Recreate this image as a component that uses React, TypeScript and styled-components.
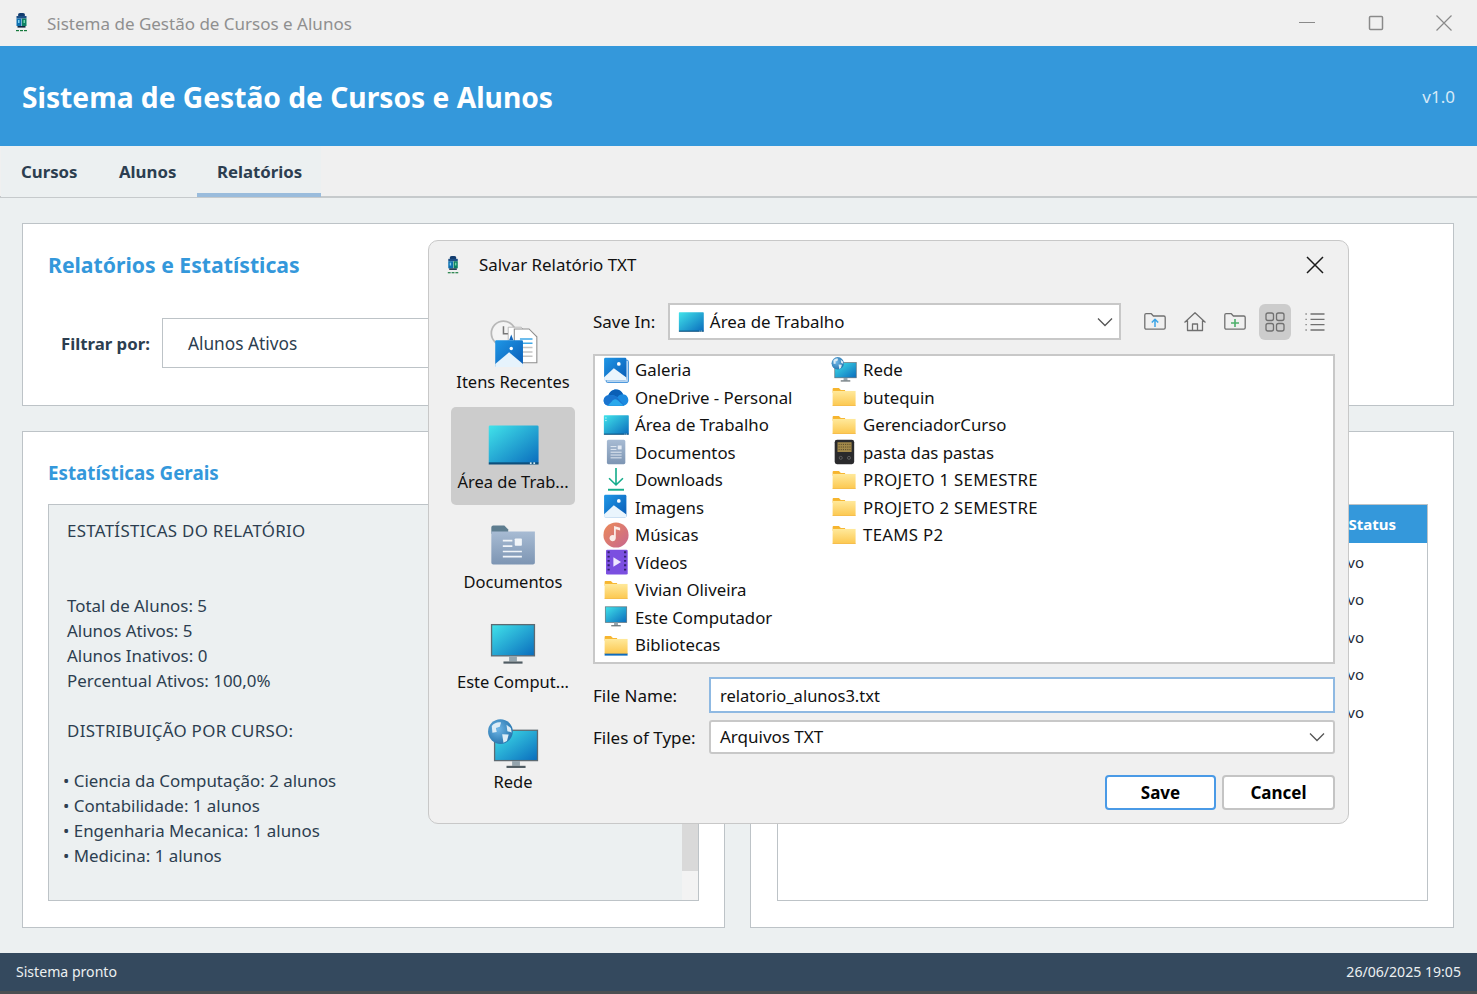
import React from 'react';
import styled, { createGlobalStyle } from 'styled-components';

const FONT = '"Noto Sans", "Open Sans", sans-serif';

const GlobalStyle = createGlobalStyle`
  html, body {
    margin: 0;
    padding: 0;
    height: 100%;
    overflow: hidden;
    background: #ecf0f1;
    font-family: ${FONT};
  }
  * {
    box-sizing: border-box;
  }
`;

type IconProps = { size?: number };

const Gradients = () => (
  <HiddenSvg aria-hidden="true">
    <defs>
      <linearGradient id="teal" x1="0" y1="0" x2="1" y2="1">
        <stop offset="0" stopColor="#41e3ea" />
        <stop offset="1" stopColor="#0a6cbd" />
      </linearGradient>
      <linearGradient id="folder" x1="0" y1="0" x2="0" y2="1">
        <stop offset="0" stopColor="#ffe99b" />
        <stop offset="1" stopColor="#fcc850" />
      </linearGradient>
      <linearGradient id="photo" x1="0" y1="0" x2="1" y2="1">
        <stop offset="0" stopColor="#1f97e6" />
        <stop offset="1" stopColor="#0a5bb5" />
      </linearGradient>
      <linearGradient id="docs" x1="0" y1="0" x2="0" y2="1">
        <stop offset="0" stopColor="#a7bbd3" />
        <stop offset="1" stopColor="#7d95b3" />
      </linearGradient>
      <linearGradient id="music" x1="0" y1="0" x2="1" y2="1">
        <stop offset="0" stopColor="#ec8a58" />
        <stop offset="1" stopColor="#c76790" />
      </linearGradient>
      <radialGradient id="globe" cx="0.4" cy="0.4" r="0.7">
        <stop offset="0" stopColor="#6fb6e6" />
        <stop offset="1" stopColor="#1f6ea8" />
      </radialGradient>
    </defs>
  </HiddenSvg>
);

const AppIcon = ({ size = 20 }: IconProps) => (
  <svg width={size} height={size} viewBox="0 0 20 20">
    <rect x="6" y="0" width="7" height="4" rx="2" fill="#123c6e" />
    <rect x="4.5" y="3" width="10" height="2.5" fill="#1d4f86" />
    <rect x="4.5" y="5.5" width="5" height="7.5" fill="#0d6fb0" />
    <rect x="10" y="5.5" width="4.5" height="7.5" fill="#0c7f63" />
    <rect x="6" y="7" width="1.5" height="3" fill="#7fd0ef" />
    <rect x="11.5" y="7" width="1.5" height="3" fill="#6fd6a8" />
    <rect x="5.5" y="13" width="8" height="1.6" fill="#10253f" />
    <rect x="4" y="17" width="3" height="1.2" fill="#157a3c" />
    <rect x="8" y="17" width="3" height="1.2" fill="#157a3c" />
    <rect x="12" y="17" width="3" height="1.2" fill="#157a3c" />
  </svg>
);

const DesktopIcon = ({ size = 26, marks }: IconProps & { marks?: boolean }) => (
  <svg width={size} height={size} viewBox="0 0 24 24">
    <rect x="0.8" y="3" width="23" height="17.5" rx="0.6" fill="url(#teal)" />
    <rect x="0.8" y="20" width="23" height="1" fill="#0d4f7c" />
    <rect x="19.8" y="20" width="0.8" height="0.8" fill="#d8eef7" />
    <rect x="21.4" y="20" width="0.8" height="0.8" fill="#d8eef7" />
    {marks && (
      <>
        <rect x="2.2" y="5" width="1" height="1" fill="#e8fbff" />
        <rect x="2.2" y="7.4" width="1" height="1" fill="#e8fbff" />
      </>
    )}
  </svg>
);

const MonitorIcon = ({ size = 26 }: IconProps) => (
  <svg width={size} height={size} viewBox="0 0 24 24">
    <rect x="2.1" y="2.6" width="19.8" height="14.4" fill="url(#teal)" stroke="#5d6a72" strokeWidth="0.6" />
    <rect x="10.2" y="17.2" width="3.6" height="2.4" fill="#95a5ae" />
    <rect x="7.6" y="19.6" width="8.8" height="1" fill="#4f5b62" />
  </svg>
);

const NetworkIcon = ({ size = 26 }: IconProps) => (
  <svg width={size} height={size} viewBox="0 0 24 24">
    <rect x="3.5" y="5.2" width="19.8" height="14" fill="url(#teal)" stroke="#5d6a72" strokeWidth="0.6" />
    <rect x="11.6" y="19.4" width="3.6" height="2.2" fill="#95a5ae" />
    <rect x="9" y="21.6" width="8.8" height="1" fill="#4f5b62" />
    <circle cx="6.2" cy="5.8" r="5.7" fill="url(#globe)" />
    <path d="M2.2 3.2c1.2-1.5 3-2 4.3-1.6l-.6 2-1.8.6.4 1.8-2 .4zM7 7l3 .2-.8 3-1.6.8zM9 2.6l2 1.6.4 2-2-.6z" fill="#dcecf6" />
  </svg>
);

const FolderIcon = ({ size = 26, shelf }: IconProps & { shelf?: boolean }) => (
  <svg width={size} height={size} viewBox="0 0 24 24">
    <path d="M1.5 6V4.6c0-.5.4-.8.8-.8h5l1.8 1.8H13V8H1.5z" fill="#f6b52e" />
    <path d="M1.5 6.4h21.2V20H1.5z" fill="url(#folder)" />
    <rect x="1.5" y="19.4" width="21.2" height="0.7" fill="#f3b53a" />
    {shelf && <rect x="1.5" y="20" width="21.2" height="1.8" fill="#0f6cbd" />}
  </svg>
);

const PhotoIcon = ({ size = 26, stacked }: IconProps & { stacked?: boolean }) => (
  <svg width={size} height={size} viewBox="0 0 24 24">
    {stacked && <rect x="3" y="3" width="20.5" height="20.5" rx="1.2" fill="#bcd8f2" stroke="#2f86d6" strokeWidth="0.8" />}
    <rect x="1" y="0.8" width="20.6" height="20.6" rx="1.2" fill="url(#photo)" />
    <circle cx="14.6" cy="6.4" r="1.7" fill="#fff" />
    <path d="M1 21.4v-2.6L10 10.4l11.6 8.6v2.4z" fill="#eaf5fd" />
  </svg>
);

const CloudIcon = ({ size = 26 }: IconProps) => (
  <svg width={size} height={size} viewBox="0 0 24 24">
    <path d="M5.4 20C2.6 20 .6 17.8.6 15.2c0-2.5 1.9-4.5 4.4-4.8C6 7 8.8 5 12 5c2.9 0 5.4 1.6 6.5 4.4 2.8.2 4.9 2.5 4.9 5.3 0 2.9-2.3 5.3-5.2 5.3z" fill="#1b8ae0" />
    <path d="M5 10.4C6 7 8.8 5 12 5c2.9 0 5.4 1.6 6.5 4.4-2.6 0-4.2 1.2-5.2 2.8-2.4-1.8-5.6-2.2-8.3-1.8z" fill="#0b5fb6" />
    <path d="M5.4 20C2.6 20 .6 17.8.6 15.2c0-2.5 1.9-4.5 4.4-4.8 3-.5 6 .2 8.3 2l6.5 7.6z" fill="#1a74cf" />
    <path d="M4.2 20l5-5c1.4-1.2 3-1 4.3 0l5.8 5z" fill="#2aa9ec" />
  </svg>
);

const DocumentIcon = ({ size = 26 }: IconProps) => (
  <svg width={size} height={size} viewBox="0 0 24 24">
    <rect x="3.6" y="0.8" width="17" height="22.4" rx="1.4" fill="url(#docs)" />
    <path d="M7 7h5.4M7 9.6h5.4M7 12.2h10.2M7 14.8h10.2M7 17.4h10.2" stroke="#e3eaf3" strokeWidth="0.9" />
    <rect x="13.6" y="6" width="3.6" height="3.6" fill="#e3eaf3" />
  </svg>
);

const DownloadIcon = ({ size = 26 }: IconProps) => (
  <svg width={size} height={size} viewBox="0 0 24 24" fill="none" stroke="#17ad8c" strokeWidth="1.5">
    <path d="M12 1v15.4M5.6 10.4L12 16.6l6.4-6.2" />
    <path d="M4.6 21h14.8" strokeWidth="1.8" />
  </svg>
);

const MusicIcon = ({ size = 26 }: IconProps) => (
  <svg width={size} height={size} viewBox="0 0 24 24">
    <circle cx="12" cy="12" r="11.6" fill="url(#music)" />
    <path d="M11.8 5.4v9.4a2.9 2.9 0 1 1-1.6-2.5V3.8l5.6 1.4v2.6l-4-1z" fill="#fbeee9" />
  </svg>
);

const VideoIcon = ({ size = 26 }: IconProps) => (
  <svg width={size} height={size} viewBox="0 0 24 24">
    <rect x="2.8" y="0.6" width="20" height="23" rx="1.2" fill="#7b4fe0" />
    <path d="M4.2 3h2M4.2 7h2M4.2 11h2M4.2 15h2M4.2 19h2M19.4 3h2M19.4 7h2M19.4 11h2M19.4 15h2M19.4 19h2" stroke="#31206e" strokeWidth="1.7" />
    <path d="M9.6 7.6l7 4.4-7 4.4z" fill="#efe8ff" />
  </svg>
);

const CardIcon = ({ size = 26 }: IconProps) => (
  <svg width={size} height={size} viewBox="0 0 24 24">
    <rect x="3.4" y="0.8" width="18" height="22.4" rx="2.2" fill="#2a2a2c" />
    <rect x="6" y="3" width="13" height="9" fill="#a3894a" />
    <path d="M7 5h11M7 7.4h11M7 9.8h11" stroke="#4c4126" strokeWidth="0.8" strokeDasharray="1 1" />
    <circle cx="9" cy="17.4" r="1.4" fill="none" stroke="#6d6d6d" strokeWidth="0.7" />
    <circle cx="16.6" cy="17.4" r="1.4" fill="none" stroke="#6d6d6d" strokeWidth="0.7" />
  </svg>
);

const RecentIcon = ({ size = 52 }: IconProps) => (
  <svg width={size} height={size} viewBox="0 0 24 24">
    <circle cx="7.6" cy="6.6" r="5.6" fill="#f4f4f4" stroke="#b8b8b8" strokeWidth="0.8" />
    <path d="M7.6 3.4v3.4h2.2" fill="none" stroke="#777" strokeWidth="0.7" />
    <path d="M9.8 3.8h6l3 3v12.4h-9z" fill="#fff" stroke="#a8a8a8" strokeWidth="0.35" />
    <path d="M12.6 4.6h6.8l3.6 3.6v12H12.6z" fill="#fff" stroke="#8e8e8e" strokeWidth="0.5" />
    <path d="M15.2 9.2H21M15.2 11.2H21" stroke="#3fa8e8" strokeWidth="0.7" />
    <path d="M15.2 13.2H21M15.2 15.2H21M15.2 17.2H21" stroke="#c4c4c4" strokeWidth="0.7" />
    <path d="M11.2 7.2l-1 2.6h2z" fill="#1167be" />
    <rect x="3.8" y="9.8" width="12.8" height="12.4" rx="0.5" fill="url(#photo)" />
    <circle cx="11.2" cy="13.6" r="0.8" fill="#fff" />
    <path d="M3.8 22.2v-1.4l6.4-5.4 6.4 5.4v1.4z" fill="#e6f3fc" />
  </svg>
);

const DocsFolderIcon = ({ size = 52 }: IconProps) => (
  <svg width={size} height={size} viewBox="0 0 24 24">
    <path d="M2 6.8V3.9c0-.5.4-.9.9-.9H8l1.8 1.8v2z" fill="#5e7d8f" />
    <path d="M2 5.8h20.1v14.3c0 .5-.4.9-.9.9H2.9c-.5 0-.9-.4-.9-.9z" fill="url(#docs)" />
    <path d="M7.3 10h4.4M7.3 12.5h4.4M7.3 15h8.8M7.3 17.4h8.8" stroke="#f1f5f9" strokeWidth="0.8" />
    <rect x="12.8" y="9" width="3.3" height="3.3" rx="0.4" fill="#f1f5f9" />
  </svg>
);

const Chevron = () => (
  <svg width="16" height="10" viewBox="0 0 16 10" fill="none" stroke="#555" strokeWidth="1.3">
    <path d="M1 1.5l7 7 7-7" />
  </svg>
);

const ToolGlyph = ({ children }: { children: React.ReactNode }) => (
  <svg width="24" height="24" viewBox="0 0 24 24" fill="none" stroke="#707070" strokeWidth="1.3" strokeLinejoin="round">
    {children}
  </svg>
);

const FOLDER_OUTLINE = 'M1.8 6.5V5c0-.8.6-1.3 1.3-1.3h5.2L10.4 6h10.4c.8 0 1.4.6 1.4 1.4v10.4c0 .8-.6 1.4-1.4 1.4H3.2c-.8 0-1.4-.6-1.4-1.4z';

type Entry = { name: string; icon: React.ReactNode };

const leftEntries: Entry[] = [
  { name: 'Galeria', icon: <PhotoIcon stacked /> },
  { name: 'OneDrive - Personal', icon: <CloudIcon /> },
  { name: 'Área de Trabalho', icon: <DesktopIcon marks /> },
  { name: 'Documentos', icon: <DocumentIcon /> },
  { name: 'Downloads', icon: <DownloadIcon /> },
  { name: 'Imagens', icon: <PhotoIcon /> },
  { name: 'Músicas', icon: <MusicIcon /> },
  { name: 'Vídeos', icon: <VideoIcon /> },
  { name: 'Vivian Oliveira', icon: <FolderIcon /> },
  { name: 'Este Computador', icon: <MonitorIcon /> },
  { name: 'Bibliotecas', icon: <FolderIcon shelf /> },
];

const rightEntries: Entry[] = [
  { name: 'Rede', icon: <NetworkIcon /> },
  { name: 'butequin', icon: <FolderIcon /> },
  { name: 'GerenciadorCurso', icon: <FolderIcon /> },
  { name: 'pasta das pastas', icon: <CardIcon /> },
  { name: 'PROJETO 1 SEMESTRE', icon: <FolderIcon /> },
  { name: 'PROJETO 2 SEMESTRE', icon: <FolderIcon /> },
  { name: 'TEAMS P2', icon: <FolderIcon /> },
];

const places: Entry[] = [
  { name: 'Itens Recentes', icon: <RecentIcon /> },
  { name: 'Área de Trab...', icon: <DesktopIcon size={52} /> },
  { name: 'Documentos', icon: <DocsFolderIcon /> },
  { name: 'Este Comput...', icon: <MonitorIcon size={52} /> },
  { name: 'Rede', icon: <NetworkIcon size={52} /> },
];

const reportLines = [
  'ESTATÍSTICAS DO RELATÓRIO',
  '',
  '',
  'Total de Alunos: 5',
  'Alunos Ativos: 5',
  'Alunos Inativos: 0',
  'Percentual Ativos: 100,0%',
  '',
  'DISTRIBUIÇÃO POR CURSO:',
  '',
  '• Ciencia da Computação: 2 alunos',
  '• Contabilidade: 1 alunos',
  '• Engenharia Mecanica: 1 alunos',
  '• Medicina: 1 alunos',
  '',
  'Média de idade',
];

const isCaps = (text: string) => text !== '' && text === text.toUpperCase();

const FileEntries = ({ entries }: { entries: Entry[] }) => (
  <FileColumn>
    {entries.map((entry) => (
      <FileRow key={entry.name} $caps={isCaps(entry.name)}>
        {entry.icon}
        {entry.name}
      </FileRow>
    ))}
  </FileColumn>
);

const App = () => (
  <Screen>
    <GlobalStyle />
    <Gradients />
    <TitleBar>
      <AppIconSlot>
        <AppIcon />
      </AppIconSlot>
      <WindowTitle>Sistema de Gestão de Cursos e Alunos</WindowTitle>
      <WindowControls>
        <svg width="16" height="16" viewBox="0 0 16 16" stroke="#8a8a8a" strokeWidth="1">
          <path d="M0 7.5h16" />
        </svg>
        <svg width="16" height="16" viewBox="0 0 16 16" fill="none" stroke="#8a8a8a" strokeWidth="1.5">
          <rect x="1.5" y="1.5" width="13" height="13" rx="1" />
        </svg>
        <svg width="16" height="16" viewBox="0 0 16 16" stroke="#8a8a8a" strokeWidth="1.2">
          <path d="M.5.5l15 15M15.5.5l-15 15" />
        </svg>
      </WindowControls>
    </TitleBar>

    <Banner>
      <BannerTitle>Sistema de Gestão de Cursos e Alunos</BannerTitle>
      <Version>v1.0</Version>
    </Banner>

    <TabBar>
      <Tab>Cursos</Tab>
      <Tab>Alunos</Tab>
      <Tab $active>Relatórios</Tab>
    </TabBar>

    <Content>
      <FilterCard>
        <PageHeading>Relatórios e Estatísticas</PageHeading>
        <FilterRow>
          <FilterLabel>Filtrar por:</FilterLabel>
          <FilterSelect>Alunos Ativos</FilterSelect>
        </FilterRow>
      </FilterCard>

      <Columns>
        <Panel>
          <SectionHeading>Estatísticas Gerais</SectionHeading>
          <ReportBox>
            <ReportText>
              {reportLines.map((line, i) => (
                <ReportLine key={i} $caps={isCaps(line)} $bullet={line.startsWith('•')}>
                  {line}
                </ReportLine>
              ))}
            </ReportText>
            <ScrollTrack>
              <ScrollThumb />
            </ScrollTrack>
          </ReportBox>
        </Panel>
        <Panel>
          <SectionHeading />
          <TableBox>
            <TableHead>Status</TableHead>
            {[0, 1, 2, 3, 4].map((row) => (
              <TableRow key={row}>Ativo</TableRow>
            ))}
          </TableBox>
        </Panel>
      </Columns>
    </Content>

    <StatusBar>
      <span>Sistema pronto</span>
      <span>26/06/2025 19:05</span>
    </StatusBar>

    <Dialog>
      <DialogHeader>
        <DialogIconSlot>
          <AppIcon size={19} />
        </DialogIconSlot>
        <DialogTitle>Salvar Relatório TXT</DialogTitle>
        <svg width="18" height="18" viewBox="0 0 18 18" stroke="#1a1a1a" strokeWidth="1.5">
          <path d="M1 1l16 16M17 1L1 17" />
        </svg>
      </DialogHeader>
      <DialogBody>
        <Sidebar>
          {places.map((place, i) => (
            <Place key={place.name} $selected={i === 1}>
              {place.icon}
              <PlaceLabel>{place.name}</PlaceLabel>
            </Place>
          ))}
        </Sidebar>
        <Main>
          <SaveInRow>
            <FieldLabel>Save In:</FieldLabel>
            <SaveInCombo>
              <ComboValue>
                <DesktopIcon size={26} />
                Área de Trabalho
              </ComboValue>
              <Chevron />
            </SaveInCombo>
            <Tools>
              <ToolButton>
                <ToolGlyph>
                  <path d={FOLDER_OUTLINE} />
                  <path d="M12 17V9.5M8.8 12.5L12 9.3l3.2 3.2" stroke="#3ba4e6" strokeWidth="1.5" />
                </ToolGlyph>
              </ToolButton>
              <ToolButton>
                <ToolGlyph>
                  <path d="M1.5 12.5L12 2.8l10.5 9.7M4.5 10.5v10h15v-10M9.5 20.5V14h5v6.5" />
                </ToolGlyph>
              </ToolButton>
              <ToolButton>
                <ToolGlyph>
                  <path d={FOLDER_OUTLINE} />
                  <path d="M12 9v8M8 13h8" stroke="#4caf6a" strokeWidth="1.6" />
                </ToolGlyph>
              </ToolButton>
              <ToolButton $active>
                <ToolGlyph>
                  <rect x="3" y="3" width="7.5" height="7.5" rx="2" />
                  <rect x="13.5" y="3" width="7.5" height="7.5" rx="2" />
                  <rect x="3" y="13.5" width="7.5" height="7.5" rx="2" />
                  <rect x="13.5" y="13.5" width="7.5" height="7.5" rx="2" />
                </ToolGlyph>
              </ToolButton>
              <ToolButton>
                <ToolGlyph>
                  <path d="M7.5 4h14M7.5 9.3h14M7.5 14.6h14M7.5 20h14" />
                  <path d="M2.5 4h2M2.5 9.3h2M2.5 14.6h2M2.5 20h2" strokeDasharray="1.2 0.8" />
                </ToolGlyph>
              </ToolButton>
            </Tools>
          </SaveInRow>

          <FileList>
            <FileEntries entries={leftEntries} />
            <FileEntries entries={rightEntries} />
          </FileList>

          <FormGrid>
            <FieldLabel>File Name:</FieldLabel>
            <NameInput readOnly value="relatorio_alunos3.txt" />
            <FieldLabel>Files of Type:</FieldLabel>
            <TypeCombo>
              Arquivos TXT
              <Chevron />
            </TypeCombo>
          </FormGrid>

          <Actions>
            <ActionButton $primary>Save</ActionButton>
            <ActionButton>Cancel</ActionButton>
          </Actions>
        </Main>
      </DialogBody>
    </Dialog>
  </Screen>
);

const HiddenSvg = styled.svg`
  position: absolute;
  width: 0;
  height: 0;
`;

const Screen = styled.div`
  position: relative;
  display: flex;
  flex-direction: column;
  width: 1477px;
  height: 994px;
  overflow: hidden;
  background: #ecf0f1;
`;

const TitleBar = styled.div`
  display: flex;
  align-items: center;
  height: 46px;
  flex: none;
  background: #f0f0f0;
`;

const AppIconSlot = styled.div`
  display: flex;
  width: 47px;
  padding-left: 12px;
`;

const WindowTitle = styled.div`
  font-size: 17px;
  color: #8f8f8f;
`;

const WindowControls = styled.div`
  display: flex;
  align-items: center;
  gap: 52.5px;
  margin-left: auto;
  padding-right: 25px;
`;

const Banner = styled.header`
  display: flex;
  align-items: center;
  justify-content: space-between;
  flex: none;
  height: 100px;
  padding: 0 22px;
  background: #3498db;
  color: #fff;
`;

const BannerTitle = styled.h1`
  margin: 0;
  padding-top: 2px;
  font-size: 28.2px;
  font-weight: 700;
`;

const Version = styled.span`
  padding-top: 1px;
  font-size: 17px;
  color: #d6eaf8;
`;

const TabBar = styled.nav`
  display: flex;
  flex: none;
  height: 52px;
  padding-left: 1px;
  background: #f0f0f0;
  border-bottom: 2px solid #c6cacc;
`;

const Tab = styled.div<{ $active?: boolean }>`
  display: flex;
  align-items: center;
  height: 51px;
  min-width: 98px;
  padding: 4px 19px 0 20px;
  background: #ecf0f1;
  font-size: 16.8px;
  font-weight: 700;
  color: #2c3e50;
  border-bottom: 4px solid ${({ $active }) => ($active ? '#9abcdc' : 'transparent')};
`;

const Content = styled.main`
  display: flex;
  flex-direction: column;
  flex: 1;
  min-height: 0;
  gap: 25px;
  padding: 25px 23px 25px 22px;
`;

const FilterCard = styled.section`
  flex: none;
  height: 183px;
  padding: 24px 25px 0;
  background: #fff;
  border: 1px solid #bdc3c7;
`;

const PageHeading = styled.h2`
  margin: 0;
  font-size: 21.2px;
  line-height: 34px;
  font-weight: 700;
  color: #3498db;
`;

const FilterRow = styled.div`
  display: flex;
  align-items: center;
  gap: 12px;
  margin-top: 36px;
  padding-left: 13px;
`;

const FilterLabel = styled.label`
  font-size: 16.8px;
  font-weight: 700;
  color: #2c3e50;
`;

const FilterSelect = styled.div`
  display: flex;
  align-items: center;
  width: 400px;
  height: 50px;
  padding-left: 25px;
  border: 1px solid #bdc3c7;
  font-size: 17.3px;
  color: #2c3e50;
`;

const Columns = styled.div`
  display: grid;
  grid-template-columns: 703px 704px;
  gap: 25px;
  flex: 1;
  min-height: 0;
`;

const Panel = styled.section`
  display: flex;
  flex-direction: column;
  padding: 24px 25px 26px 25px;
  background: #fff;
  border: 1px solid #bdc3c7;
  min-height: 0;
`;

const SectionHeading = styled.h3`
  flex: none;
  height: 48px;
  margin: 0;
  font-size: 18.8px;
  line-height: 34px;
  font-weight: 700;
  color: #3498db;
`;

const ReportBox = styled.div`
  position: relative;
  flex: 1;
  display: flex;
  min-height: 0;
  overflow: hidden;
  background: #ecf0f1;
  border: 1px solid #bdc3c7;
`;

const ReportText = styled.div`
  flex: 1;
  padding: 13px 18px;
  font-size: 16.9px;
  line-height: 25px;
  color: #2c3e50;
`;

const ReportLine = styled.div<{ $caps?: boolean; $bullet?: boolean }>`
  height: 25px;
  white-space: pre;
  letter-spacing: ${({ $caps }) => ($caps ? '0.3px' : '0')};
  margin-left: ${({ $bullet }) => ($bullet ? '-4px' : '0')};
`;

const ScrollTrack = styled.div`
  width: 16px;
  flex: none;
  background: #f3f3f3;
`;

const ScrollThumb = styled.div`
  height: 366px;
  background: #d9d9d9;
`;

const TableBox = styled.div`
  flex: 1;
  min-height: 0;
  margin-left: 1px;
  border: 1px solid #bdc3c7;
  background: #fff;
`;

const TableHead = styled.div`
  display: flex;
  align-items: center;
  justify-content: flex-end;
  height: 38px;
  padding: 0 31px 1px 0;
  background: #3498db;
  color: #fff;
  font-size: 15px;
  font-weight: 700;
`;

const TableRow = styled.div`
  display: flex;
  align-items: center;
  justify-content: flex-end;
  height: 37.5px;
  padding-right: 63px;
  font-size: 15px;
  color: #1f2d3a;
`;

const StatusBar = styled.footer`
  display: flex;
  align-items: center;
  justify-content: space-between;
  flex: none;
  height: 41px;
  padding: 0 16px 1px;
  background: #34495e;
  border-bottom: 3px solid #4b4f52;
  color: #ecf0f1;
  font-size: 14.1px;
`;

const Dialog = styled.div`
  position: absolute;
  left: 428px;
  top: 240px;
  width: 921px;
  height: 584px;
  display: flex;
  flex-direction: column;
  padding: 0 13px 0 22px;
  background: #f0f0f0;
  border: 1px solid #c8c8c8;
  border-radius: 10px;
`;

const DialogHeader = styled.div`
  display: flex;
  align-items: center;
  height: 48px;
  flex: none;
  padding-right: 11px;
`;

const DialogIconSlot = styled.div`
  display: flex;
  margin-left: -7px;
  width: 35px;
`;

const DialogTitle = styled.div`
  flex: 1;
  padding-bottom: 2px;
  font-size: 16.9px;
  color: #111;
`;

const DialogBody = styled.div`
  display: flex;
  gap: 18px;
  flex: 1;
  padding-top: 14px;
`;

const Sidebar = styled.div`
  display: flex;
  flex-direction: column;
  gap: 2px;
  width: 124px;
  margin-top: 4px;
`;

const Place = styled.div<{ $selected?: boolean }>`
  display: flex;
  flex-direction: column;
  align-items: center;
  height: 98px;
  padding-top: 12px;
  border-radius: 5px;
  background: ${({ $selected }) => ($selected ? '#cccccc' : 'transparent')};
`;

const PlaceLabel = styled.div`
  font-size: 16.5px;
  line-height: 22px;
  color: #111;
  white-space: nowrap;
`;

const Main = styled.div`
  display: flex;
  flex-direction: column;
  flex: 1;
  min-width: 0;
`;

const SaveInRow = styled.div`
  display: flex;
  align-items: center;
  height: 37px;
  flex: none;
`;

const FieldLabel = styled.div`
  font-size: 17px;
  color: #111;
  white-space: nowrap;
`;

const SaveInCombo = styled.div`
  display: flex;
  align-items: center;
  justify-content: space-between;
  width: 453px;
  height: 37px;
  margin-left: 12.5px;
  padding: 0 6px 0 8px;
  background: #fff;
  border: 2px solid #c8c8c8;
`;

const ComboValue = styled.div`
  display: flex;
  align-items: center;
  gap: 6px;
  font-size: 16.9px;
  color: #111;
`;

const Tools = styled.div`
  display: flex;
  gap: 8px;
  margin-left: 18px;
`;

const ToolButton = styled.div<{ $active?: boolean }>`
  display: flex;
  align-items: center;
  justify-content: center;
  width: 32px;
  height: 36px;
  border-radius: 6px;
  background: ${({ $active }) => ($active ? '#cccccc' : 'transparent')};
`;

const FileList = styled.div`
  display: grid;
  grid-template-columns: 228px 1fr;
  flex: none;
  height: 310px;
  margin-top: 14px;
  padding: 0 8px;
  background: #fff;
  border: 2px solid #c8c8c8;
`;

const FileColumn = styled.div`
  display: flex;
  flex-direction: column;
`;

const FileRow = styled.div<{ $caps?: boolean }>`
  display: flex;
  align-items: center;
  gap: 6px;
  height: 27.5px;
  font-size: 16.8px;
  letter-spacing: ${({ $caps }) => ($caps ? '0.3px' : '0')};
  color: #111;
  white-space: nowrap;
`;

const FormGrid = styled.div`
  display: grid;
  grid-template-columns: 116px 1fr;
  grid-template-rows: 36px 34px;
  align-items: center;
  row-gap: 7px;
  margin-top: 13px;
`;

const NameInput = styled.input`
  width: 100%;
  height: 36px;
  padding: 0 9px;
  background: #fff;
  border: 2px solid #8fb9e2;
  outline: none;
  font-family: ${FONT};
  font-size: 16.5px;
  color: #111;
`;

const TypeCombo = styled.div`
  display: flex;
  align-items: center;
  justify-content: space-between;
  height: 34px;
  padding: 0 8px 1px 9px;
  background: #fff;
  border: 2px solid #c8c8c8;
  border-radius: 3px;
  font-size: 17px;
  color: #111;
`;

const Actions = styled.div`
  display: flex;
  justify-content: flex-end;
  gap: 6px;
  margin-top: 21px;
`;

const ActionButton = styled.button<{ $primary?: boolean }>`
  width: ${({ $primary }) => ($primary ? '111px' : '113px')};
  height: 35px;
  background: #fff;
  border: 2px solid ${({ $primary }) => ($primary ? '#4a9ae6' : '#c4c4c4')};
  border-radius: 4px;
  font-family: ${FONT};
  font-size: 17px;
  font-weight: 700;
  color: #000;
`;

export default App;
